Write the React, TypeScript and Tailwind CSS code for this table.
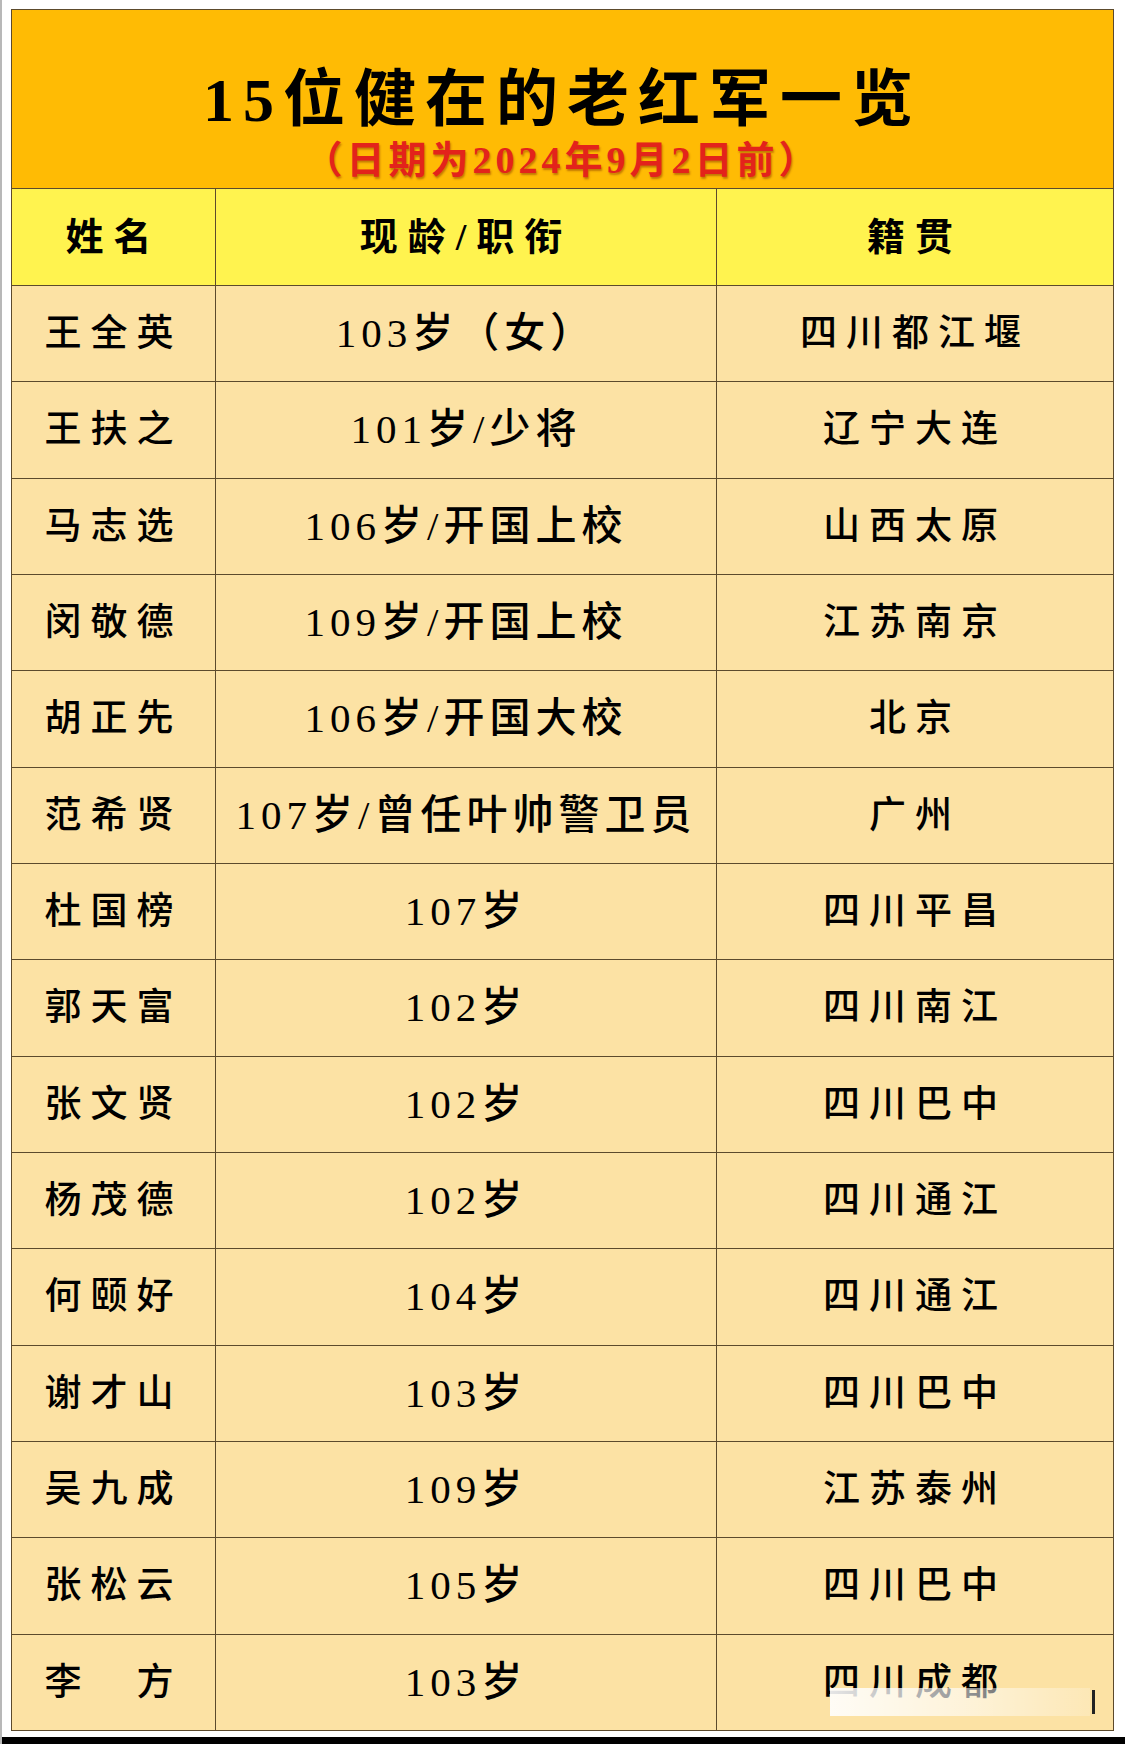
import React from "react";

interface Veteran {
  name: string;
  age: string;
  origin: string;
}

const veterans: Veteran[] = [
  { name: "王全英", age: "103岁（女）", origin: "四川都江堰" },
  { name: "王扶之", age: "101岁/少将", origin: "辽宁大连" },
  { name: "马志选", age: "106岁/开国上校", origin: "山西太原" },
  { name: "闵敬德", age: "109岁/开国上校", origin: "江苏南京" },
  { name: "胡正先", age: "106岁/开国大校", origin: "北京" },
  { name: "范希贤", age: "107岁/曾任叶帅警卫员", origin: "广州" },
  { name: "杜国榜", age: "107岁", origin: "四川平昌" },
  { name: "郭天富", age: "102岁", origin: "四川南江" },
  { name: "张文贤", age: "102岁", origin: "四川巴中" },
  { name: "杨茂德", age: "102岁", origin: "四川通江" },
  { name: "何颐好", age: "104岁", origin: "四川通江" },
  { name: "谢才山", age: "103岁", origin: "四川巴中" },
  { name: "吴九成", age: "109岁", origin: "江苏泰州" },
  { name: "张松云", age: "105岁", origin: "四川巴中" },
  { name: "李　方", age: "103岁", origin: "四川成都" },
];

const font = { fontFamily: '"Liberation Serif", "Noto Sans CJK SC", serif' };

export default function App() {
  return (
    <div
      className="relative flex h-[1744px] w-[1125px] flex-col bg-white text-black"
      style={font}>
      {/* left page edge */}
      <div className="absolute left-0 top-0 h-full w-[2px] bg-[#b8b8b8]" />

      <div className="ml-[11px] mt-[9px] w-[1103px] border border-[#5c4a2c]">
        {/* Title */}
        <div className="flex h-[178px] flex-col items-center justify-end bg-[#ffbb04] pb-[6px]">
          <h1 className="text-[62px] font-bold leading-[72px] tracking-[9px]">
            15位健在的老红军一览
          </h1>
          <p className="mt-[2px] text-[38px] font-bold leading-[44px] tracking-[4px] text-[#e3231b] [text-shadow:1px_2px_2px_rgba(120,40,0,0.45)]">
            （日期为2024年9月2日前）
          </p>
        </div>

        {/* Header */}
        <div className="flex h-[97px] border-t border-[#5c4a2c] bg-[#fff34f] text-[38px] font-bold tracking-[10px]">
          <div className="flex w-[204px] items-center justify-center border-r border-[#5c4a2c]">
            姓名
          </div>
          <div className="flex w-[501px] items-center justify-center border-r border-[#5c4a2c]">
            现龄/职衔
          </div>
          <div className="flex flex-1 items-center justify-center">籍贯</div>
        </div>

        {/* Rows */}
        {veterans.map((v) => (
          <div
            key={v.name}
            className="flex h-[96.33px] border-t border-[#5c4a2c] bg-[#fce2a4] text-[37px] font-medium">
            <div className="flex w-[204px] items-center justify-center border-r border-[#5c4a2c] tracking-[9px]">
              {v.name}
            </div>
            <div className="flex w-[501px] items-center justify-center border-r border-[#5c4a2c] text-[41px] tracking-[5px]">
              {v.age}
            </div>
            <div className="flex flex-1 items-center justify-center tracking-[9px]">
              {v.origin}
            </div>
          </div>
        ))}
      </div>

      {/* watermark smear near bottom right */}
      <div className="absolute left-[830px] top-[1688px] h-[28px] w-[260px] bg-gradient-to-r from-white/90 via-white/60 to-white/20" />
      <div className="absolute left-[1092px] top-[1690px] h-[24px] w-[3px] bg-[#222]" />

      <div className="flex-1" />
      <div className="h-[7px] bg-black" />
    </div>
  );
}
